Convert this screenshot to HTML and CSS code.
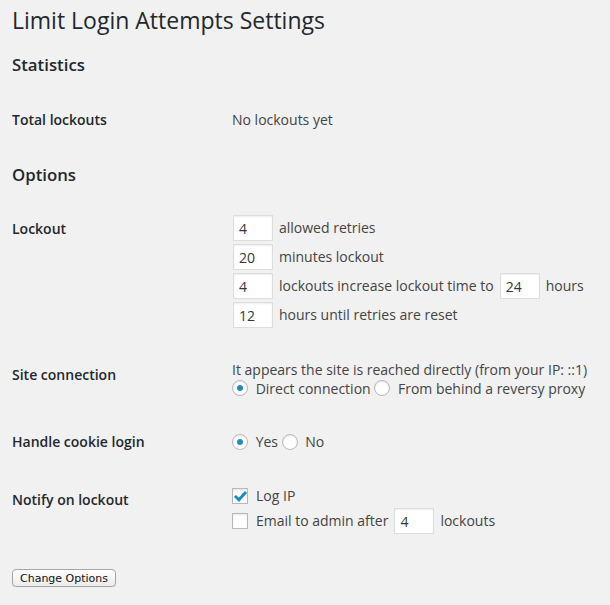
FILE: index.html
```html
<!DOCTYPE html>
<html lang="en">

<head>
    <meta charset="UTF-8" />
    <title>Limit Login Attempts Settings</title>
    <link rel="stylesheet" href="styles.css">
</head>

<body>
    <div class="wrap">
        <h2 class="page-title">Limit Login Attempts Settings</h2>

        <h3>Statistics</h3>
        <table class="form-table">
            <tr>
                <th>Total lockouts</th>
                <td>No lockouts yet</td>
            </tr>
        </table>

        <h3>Options</h3>
        <form>
            <table class="form-table">
                <tr>
                    <th>Lockout</th>
                    <td>
                        <div class="field-line"><input type="text" class="small-input" value="4"> allowed retries</div>
                        <div class="field-line"><input type="text" class="small-input" value="20"> minutes lockout</div>
                        <div class="field-line"><input type="text" class="small-input" value="4"> lockouts increase lockout time to <input type="text" class="small-input" value="24"> hours</div>
                        <div class="field-line"><input type="text" class="small-input" value="12"> hours until retries are reset</div>
                    </td>
                </tr>
                <tr>
                    <th>Site connection</th>
                    <td>
                        It appears the site is reached directly (from your IP: ::1)<br>
                        <label><input type="radio" name="conn" checked> Direct connection</label>
                        <label><input type="radio" name="conn"> From behind a reversy proxy</label>
                    </td>
                </tr>
                <tr>
                    <th>Handle cookie login</th>
                    <td>
                        <label><input type="radio" name="cookie" checked> Yes</label>
                        <label><input type="radio" name="cookie"> No</label>
                    </td>
                </tr>
                <tr>
                    <th>Notify on lockout</th>
                    <td>
                        <div class="check-line"><input type="checkbox" checked> Log IP</div>
                        <div class="check-line email-line"><input type="checkbox"> Email to admin after <input type="text" class="small-input" value="4"> lockouts</div>
                    </td>
                </tr>
            </table>
            <p class="submit"><input type="button" class="button" value="Change Options"></p>
        </form>
    </div>
</body>

</html>
```

FILE: styles.css
```css
body {
    margin: 0;
    background: #f1f1f1;
    color: #444;
    font-family: "Open Sans", sans-serif;
    font-size: 14px;
    line-height: 1.4em;
}

.wrap {
    margin: 0 12px;
}

.page-title {
    font-size: 23px;
    font-weight: 400;
    line-height: 29px;
    color: #23282d;
    margin: 0;
    padding: 6px 15px 4px 0;
}

h3 {
    font-size: 1.2em;
    font-weight: 600;
    color: #23282d;
    margin: 16px 0;
}

.form-table {
    border-collapse: collapse;
    margin-top: 0.5em;
    width: 100%;
}

.form-table th {
    width: 200px;
    padding: 20px 10px 20px 0;
    text-align: left;
    vertical-align: top;
    font-weight: 600;
    line-height: 1.3;
    color: #23282d;
}

.form-table td {
    padding: 15px 10px;
    line-height: 1.3;
    vertical-align: middle;
}

.field-line {
    display: flex;
    align-items: center;
    gap: 5px;
    height: 26px;
    margin-bottom: 3px;
}

.check-line {
    display: flex;
    align-items: center;
    gap: 5px;
    height: 20px;
}

.email-line {
    height: 27px;
    margin-top: 2px;
}

.small-input {
    width: 40px;
    height: 26px;
    box-sizing: border-box;
    padding: 3px 5px;
    margin: 0 1px;
    border: 1px solid #ddd;
    box-shadow: inset 0 1px 2px rgba(0, 0, 0, 0.07);
    background: #fff;
    color: #32373c;
    font-family: "Open Sans", sans-serif;
    font-size: 14px;
    outline: 0;
}

input[type="radio"],
input[type="checkbox"] {
    -webkit-appearance: none;
    appearance: none;
    position: relative;
    box-sizing: border-box;
    width: 16px;
    height: 16px;
    margin: -3px 4px 0 0;
    border: 1px solid #b4b9be;
    background: #fff;
    box-shadow: inset 0 1px 2px rgba(0, 0, 0, 0.1);
    vertical-align: middle;
}

input[type="radio"] {
    border-radius: 50%;
}

input[type="radio"]:checked::before {
    content: "";
    position: absolute;
    left: 4px;
    top: 4px;
    width: 6px;
    height: 6px;
    border-radius: 50%;
    background: #1e8cbe;
}

input[type="checkbox"] {
    margin: 0 3px 0 0;
}

input[type="checkbox"]:checked::before {
    content: "";
    position: absolute;
    left: 4px;
    top: 0;
    width: 4px;
    height: 9px;
    border: solid #1e8cbe;
    border-width: 0 3px 3px 0;
    transform: rotate(42deg);
}

.submit {
    margin: 17px 0 0;
}

.button {
    font-family: "DejaVu Sans", sans-serif;
    font-size: 11px;
    color: #111;
    padding: 0 7px;
    height: 18px;
    border: 1px solid #a6a6a6;
    border-radius: 4px;
    background: linear-gradient(#fff, #ececec);
    box-shadow: 0 1px 1px rgba(0, 0, 0, 0.1);
}
```
